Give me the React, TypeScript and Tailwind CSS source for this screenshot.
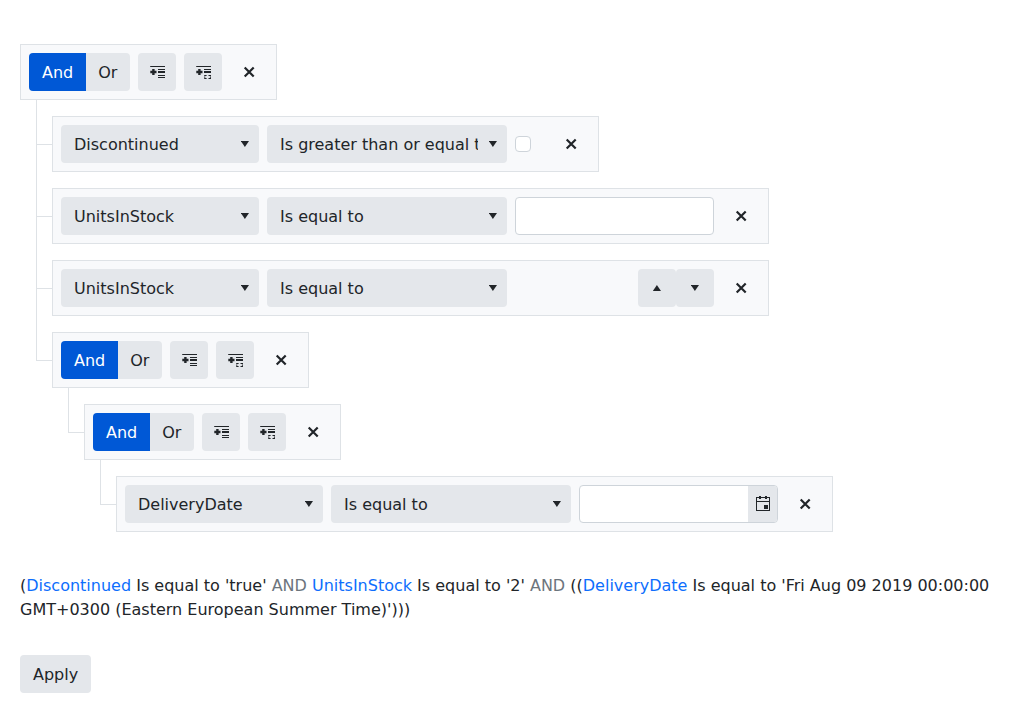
import { useState, type ReactNode } from 'react';

const FIELDS = ['Discontinued', 'UnitsInStock', 'DeliveryDate'];
const OPERATORS = ['Is equal to', 'Is not equal to', 'Is greater than or equal to', 'Is less than or equal to'];

function AddExpressionIcon() {
  return (
    <svg aria-hidden="true" className="h-4 w-4" viewBox="0 0 16 16" fill="currentColor">
      <path d="M1.2 2H16v1H1.2zM9 5h7v1H9zM9 7h7v2H9zM9 11h7v1H9zM9 13h7v1H9z" />
      <path d="M1.3 6.8h6.2v2.4H1.3zM3.2 5h2.4v6H3.2z" />
    </svg>
  );
}

function AddGroupIcon() {
  return (
    <svg aria-hidden="true" className="h-4 w-4" viewBox="0 0 16 16" fill="currentColor">
      <path d="M1.2 2H16v1H1.2zM9 5h7v1H9zM9 7h7v2H9z" />
      <path d="M1.3 6.8h6.2v2.4H1.3zM3.2 5h2.4v6H3.2z" />
      <path d="M9.2 11h2.4v1h-1.3v.6H9.2zM9.2 13.3h1.1v.7h1.3v1H9.2zM13.5 11H16v1.6h-1.1V12h-1.4zM14.9 13.3H16V15h-2.5v-1h1.4z" />
    </svg>
  );
}

function CloseIcon() {
  return (
    <svg aria-hidden="true" className="h-4 w-4" viewBox="0 0 16 16" fill="none" stroke="currentColor" strokeWidth="2.2">
      <path d="M3.7 3.5l9 9M12.7 3.5l-9 9" />
    </svg>
  );
}

function CalendarIcon() {
  return (
    <svg aria-hidden="true" className="h-4 w-4" viewBox="0 0 16 16" fill="currentColor">
      <path fillRule="evenodd" d="M1 1h14v14H1zM2 2v3h12V2zM2 6v8h12V6z" />
      <path d="M4 0h2v3H4zM10 0h2v3h-2zM9 9h4v4H9z" />
    </svg>
  );
}

function DownArrow() {
  return (
    <svg aria-hidden="true" className="size-2" viewBox="0 0 8 8" fill="currentColor">
      <path d="M-.2 1h8.2L3.9 7z" />
    </svg>
  );
}

function UpArrow() {
  return (
    <svg aria-hidden="true" className="size-2" viewBox="0 0 8 8" fill="currentColor">
      <path d="M-.2 7h8.2L3.9 1z" />
    </svg>
  );
}

function CloseButton() {
  return (
    <button type="button" aria-label="Close" className="flex size-[38px] shrink-0 items-center justify-center rounded">
      <CloseIcon />
    </button>
  );
}

function Toolbar({ children }: { children: ReactNode }) {
  return <div className="flex w-fit items-center gap-2 border border-[#dee2e6] bg-[#f8f9fb] p-2">{children}</div>;
}

function GroupToolbar() {
  const [logic, setLogic] = useState('And');
  return (
    <Toolbar>
      <div role="group" aria-label="Logic" className="flex overflow-hidden rounded">
        {['And', 'Or'].map((name) => (
          <button
            key={name}
            type="button"
            aria-pressed={logic === name}
            onClick={() => setLogic(name)}
            className={
              logic === name
                ? 'h-[38px] bg-[#0058d6] px-[13px] pt-0.5 leading-6 text-white'
                : 'h-[38px] bg-[#e4e7eb] pt-0.5 pr-[13px] pl-3 leading-6'
            }
          >
            {name}
          </button>
        ))}
      </div>
      <button type="button" aria-label="Add Expression" className="flex size-[38px] items-center justify-center rounded bg-[#e4e7eb]">
        <AddExpressionIcon />
      </button>
      <button type="button" aria-label="Add Group" className="flex size-[38px] items-center justify-center rounded bg-[#e4e7eb]">
        <AddGroupIcon />
      </button>
      <CloseButton />
    </Toolbar>
  );
}

function DropDown({ label, value, options, wide }: { label: string; value: string; options: string[]; wide?: boolean }) {
  return (
    <div className={wide ? 'relative w-60' : 'relative w-[198px]'}>
      <select
        aria-label={label}
        defaultValue={value}
        className="block h-[38px] w-full appearance-none rounded bg-[#e4e7eb] pt-0.5 pr-[29px] pl-[13px]"
      >
        {options.map((option) => (
          <option key={option}>{option}</option>
        ))}
      </select>
      <span className="pointer-events-none absolute inset-y-0 right-[10px] flex items-center">
        <DownArrow />
      </span>
    </div>
  );
}

function FilterToolbar({ field, operator, children }: { field: string; operator: string; children: ReactNode }) {
  return (
    <Toolbar>
      <DropDown label="Field" value={field} options={FIELDS} />
      <DropDown label="Operator" value={operator} options={OPERATORS} wide />
      {children}
      <CloseButton />
    </Toolbar>
  );
}

function Node({ last, children }: { last?: boolean; children: ReactNode }) {
  return (
    <li className="flex">
      <div className="flex w-4 shrink-0 flex-col">
        <div className="h-[45px] border-b border-l border-[#dee2e6]" />
        {!last && <div className="flex-1 border-l border-[#dee2e6]" />}
      </div>
      <div className="pt-4">{children}</div>
    </li>
  );
}

function Branch({ children }: { children: ReactNode }) {
  return <ul className="ml-4">{children}</ul>;
}

export default function App() {
  return (
    <main className="px-5 pt-11 pb-5 font-['DejaVu_Sans',sans-serif] text-base text-[#212529]">
      <GroupToolbar />
      <Branch>
        <Node>
          <FilterToolbar field="Discontinued" operator="Is greater than or equal to">
            <div className="flex w-[29px] items-center">
              <input
                type="checkbox"
                aria-label="Value"
                className="size-4 appearance-none rounded border border-[#ced4da] bg-white checked:bg-[#0058d6]"
              />
            </div>
          </FilterToolbar>
        </Node>
        <Node>
          <FilterToolbar field="UnitsInStock" operator="Is equal to">
            <input
              type="text"
              aria-label="Value"
              className="h-[38px] w-[199px] rounded border border-[#ced4da] bg-white px-3"
            />
          </FilterToolbar>
        </Node>
        <Node>
          <FilterToolbar field="UnitsInStock" operator="Is equal to">
            <div className="flex w-[199px]">
              <input type="text" inputMode="numeric" aria-label="Value" className="h-[38px] min-w-0 flex-1 px-3" />
              <button type="button" aria-label="Increase value" className="flex size-[38px] items-center justify-center rounded bg-[#e4e7eb]">
                <UpArrow />
              </button>
              <button type="button" aria-label="Decrease value" className="flex size-[38px] items-center justify-center rounded bg-[#e4e7eb]">
                <DownArrow />
              </button>
            </div>
          </FilterToolbar>
        </Node>
        <Node last>
          <GroupToolbar />
          <Branch>
            <Node last>
              <GroupToolbar />
              <Branch>
                <Node last>
                  <FilterToolbar field="DeliveryDate" operator="Is equal to">
                    <div className="flex h-[38px] w-[199px] overflow-hidden rounded border border-[#ced4da] bg-white">
                      <input type="text" aria-label="Value" className="min-w-0 flex-1 px-3" />
                      <button type="button" aria-label="Toggle calendar" className="flex w-[29px] items-center justify-center bg-[#e4e7eb]">
                        <CalendarIcon />
                      </button>
                    </div>
                  </FilterToolbar>
                </Node>
              </Branch>
            </Node>
          </Branch>
        </Node>
      </Branch>
      <p className="mt-[42px] leading-6">
        (<span className="text-[#0d6efd]">Discontinued</span> Is equal to 'true'{' '}
        <span className="text-[#6c757d]">AND</span> <span className="text-[#0d6efd]">UnitsInStock</span> Is equal to '2'{' '}
        <span className="text-[#6c757d]">AND</span> ((<span className="text-[#0d6efd]">DeliveryDate</span> Is equal to 'Fri
        Aug 09 2019 00:00:00 GMT+0300 (Eastern European Summer Time)')))
      </p>
      <button type="button" className="mt-[33px] h-[38px] rounded bg-[#e4e7eb] px-[13px] pt-0.5 leading-6">
        Apply
      </button>
    </main>
  );
}
